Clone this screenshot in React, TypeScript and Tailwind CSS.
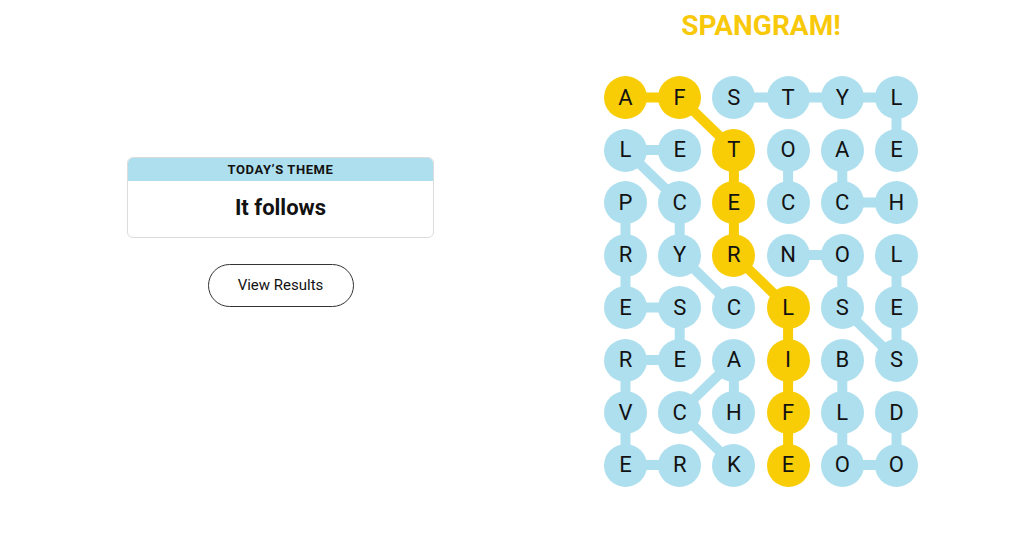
import React from "react";

const LETTERS = [
  "AFSTYL",
  "LETOAE",
  "PCECCH",
  "RYRNOL",
  "ESCLSE",
  "REAIBS",
  "VCHFLD",
  "ERKEOO",
];

const YELLOW_PATH: [number, number][] = [
  [0, 0], [0, 1], [1, 2], [2, 2], [3, 2], [4, 3], [5, 3], [6, 3], [7, 3],
];

const BLUE_EDGES: [number, number, number, number][] = [
  [0, 2, 0, 3], [0, 3, 0, 4], [0, 4, 0, 5], [0, 5, 1, 5],
  [1, 0, 1, 1], [1, 0, 2, 1], [1, 3, 2, 3], [1, 4, 2, 4], [2, 4, 2, 5],
  [2, 0, 3, 0], [2, 1, 3, 1], [3, 1, 4, 2], [3, 3, 3, 4], [3, 5, 4, 5],
  [3, 4, 4, 4], [3, 0, 4, 0],
  [4, 0, 4, 1], [4, 1, 5, 1], [4, 4, 5, 5], [4, 5, 5, 5],
  [5, 0, 5, 1], [5, 0, 6, 0], [5, 2, 6, 2], [5, 2, 6, 1], [5, 4, 6, 4],
  [6, 0, 7, 0], [6, 1, 7, 2], [6, 4, 7, 4], [6, 5, 7, 5],
  [7, 0, 7, 1], [7, 4, 7, 5],
];

const BLUE = "#aedfee";
const GOLD = "#f8cd05";
const D = 43;
const SX = 54.2;
const SY = 52.5;
const cx = (c: number) => D / 2 + c * SX;
const cy = (r: number) => D / 2 + r * SY;

const isGold = (r: number, c: number) =>
  YELLOW_PATH.some(([rr, cc]) => rr === r && cc === c);

export default function App() {
  const W = D + 5 * SX;
  const H = D + 7 * SY;
  return (
    <div
      className="w-[1024px] h-[539px] bg-white flex overflow-hidden"
      style={{ fontFamily: "Roboto, 'Liberation Sans', sans-serif" }}
    >
      <div className="pl-[127px] pt-[157px] flex flex-col">
        <div className="w-[307px] rounded-[6px] border border-[#dcdcdc] overflow-hidden bg-white">
          <div className="h-[23px] bg-[#aedfee] flex items-center justify-center text-[13px] font-bold tracking-[0.6px] text-[#121212] leading-none">
            TODAY’S THEME
          </div>
          <div className="h-[56px] flex items-center justify-center text-[22px] font-bold text-[#121212] leading-none pb-[2px]">
            It follows
          </div>
        </div>
        <div className="mt-[26px] self-center w-[146px] h-[43px] rounded-full border border-[#333333] flex items-center justify-center text-[15px] text-[#121212]">
          View Results
        </div>
      </div>
      <div className="ml-[170px] pt-[10px] flex flex-col items-center">
        <div className="h-[32px] leading-[32px] text-[28px] font-bold text-[#f8c80a]">
          SPANGRAM!
        </div>
        <div className="relative mt-[34px]" style={{ width: W, height: H }}>
          <svg
            className="absolute inset-0"
            width={W}
            height={H}
            viewBox={`0 0 ${W} ${H}`}
          >
            {BLUE_EDGES.map(([r1, c1, r2, c2], i) => (
              <line
                key={i}
                x1={cx(c1)}
                y1={cy(r1)}
                x2={cx(c2)}
                y2={cy(r2)}
                stroke={BLUE}
                strokeWidth={10}
              />
            ))}
            {YELLOW_PATH.slice(1).map(([r, c], i) => {
              const [pr, pc] = YELLOW_PATH[i];
              return (
                <line
                  key={"y" + i}
                  x1={cx(pc)}
                  y1={cy(pr)}
                  x2={cx(c)}
                  y2={cy(r)}
                  stroke={GOLD}
                  strokeWidth={10}
                />
              );
            })}
          </svg>
          <div className="relative grid grid-cols-[repeat(6,43px)] grid-rows-[repeat(8,43px)] gap-x-[11.2px] gap-y-[9.5px]">
            {LETTERS.map((row, r) =>
              row.split("").map((ch, c) => (
                <div
                  key={`${r}-${c}`}
                  className={`w-[43px] h-[43px] rounded-full flex items-center justify-center text-[22px] text-[#121212] leading-none ${
                    isGold(r, c) ? "bg-[#f8cd05]" : "bg-[#aedfee]"
                  }`}
                >
                  {ch}
                </div>
              ))
            )}
          </div>
        </div>
      </div>
    </div>
  );
}
